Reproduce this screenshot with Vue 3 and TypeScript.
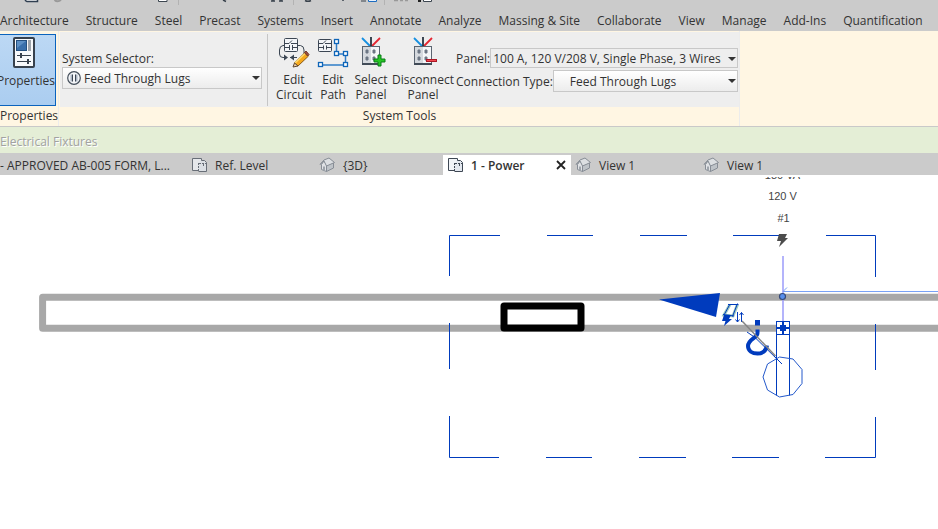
<script setup lang="ts">
import { ref } from 'vue'

interface DocTab {
  title: string
  icon: 'none' | 'plan' | 'house'
}

const menuTabs: string[] = [
  'Architecture', 'Structure', 'Steel', 'Precast', 'Systems', 'Insert', 'Annotate',
  'Analyze', 'Massing & Site', 'Collaborate', 'View', 'Manage', 'Add-Ins', 'Quantification',
]

const docTabs: DocTab[] = [
  { title: '- APPROVED AB-005 FORM, L...', icon: 'none' },
  { title: 'Ref. Level', icon: 'plan' },
  { title: '{3D}', icon: 'house' },
  { title: '1 - Power', icon: 'plan' },
  { title: 'View 1', icon: 'house' },
  { title: 'View 1', icon: 'house' },
]

const activeDoc = ref(3)
const system = ref('Feed Through Lugs')
const panel = ref('100 A, 120 V/208 V, Single Phase, 3 Wires')
const connection = ref('Feed Through Lugs')
</script>

<template>
  <div class="app">
    <header class="titlebar">
      <svg class="quick" viewBox="0 0 440 6" aria-hidden="true">
        <path d="M25.5 0v.5l1.500 1h10.500V0" fill="#fff" stroke="#2f3e50" stroke-width="1.500" />
        <path d="M54.500 0q3 2.500 6.500 0" fill="none" stroke="#999" stroke-width="2" />
        <path d="M158.500 0v1.500h8.500V0" fill="#fff" stroke="#3c4650" />
        <path d="M178.500 0v5M293.500 0v5M384.500 0v5" stroke="#b2b2b2" />
        <path d="M223 0l3 1.500M271 1h4m-2-1v1M279 1h4m-2-1v1M305 .5q3 1.500 6 0M343 0v1" fill="none" stroke="#39424c" stroke-width="1.500" />
        <path d="M361 1h5" stroke="#39424c" />
        <path d="M368.500 0v1.500h8V0" fill="#e9f1fb" stroke="#1c6cc0" />
        <path d="M394 .5h4m2 0h3m2 0h3" stroke="#999" stroke-width="1.500" />
        <path d="M418 1h3" stroke="#222" stroke-width="2" />
        <path d="M423.500 0v1.500h8V0" fill="#fff" stroke="#3c4650" />
      </svg>
      <nav class="menu">
        <a v-for="tab in menuTabs" :key="tab" href="#">{{ tab }}</a>
      </nav>
    </header>

    <section class="ribbon">
      <div class="group props">
        <div class="group-body">
          <button class="properties" type="button">
            <svg width="22" height="31" viewBox="0 0 22 31" aria-hidden="true">
              <rect x="1" y="1" width="20" height="29" rx="1" fill="#f7f9fb" stroke="#37414d" stroke-width="2" />
              <rect x="3.500" y="3.500" width="10" height="10" fill="#3a70ab" stroke="#24507f" />
              <path d="M4 4h9L4 11z" fill="#5c8fc4" />
              <path d="M16.500 3v11" stroke="#9da4ab" stroke-width="3" />
              <path d="M4 18.500h14M4 24.500h14" stroke="#37414d" />
              <path d="M8 16v5M15 22v5" stroke="#37414d" stroke-width="2" />
            </svg>
            <span>Properties</span>
          </button>
        </div>
        <div class="group-title">Properties</div>
      </div>

      <div class="group tools">
        <div class="group-body">
          <div class="selector">
            <label for="system">System Selector:</label>
            <div class="combo tall">
              <svg class="combo-icon" width="14" height="14" viewBox="0 0 14 14" aria-hidden="true">
                <circle cx="7" cy="7" r="6.300" fill="#f4f6f9" stroke="#46505c" stroke-width="1.200" />
                <path d="M4.500 3.500v7M9.500 3.500v7" stroke="#a9b3c2" stroke-width="2" />
                <path d="M5.500 3.500v7M8.500 3.500v7" stroke="#3c4653" />
              </svg>
              <select id="system" v-model="system" class="with-icon"><option>Feed Through Lugs</option></select>
              <svg class="arrow" width="8" height="4" viewBox="0 0 8 4" aria-hidden="true"><path d="M0 0h8L4 4z" fill="#333" /></svg>
            </div>
          </div>

          <div class="buttons">
            <button type="button" class="tool circuit">
              <svg width="32" height="32" viewBox="0 0 32 32" aria-hidden="true">
                <path d="M7 8.500H5Q1.500 9 1.500 13v4q0 3.500 3.500 3.500h2M20 8.500h2.500q3.500.5 3.500 4.500v5M12 20.500h7" fill="none" stroke="#3c4653" />
                <path d="M6 17.500l4 3-4 3zM16 17.500l-4 3 4 3z" fill="#3c4653" />
                <rect x="6.500" y="1.500" width="13" height="13" rx="1" fill="#f3f5f8" stroke="#3c4653" />
                <path d="M7 6.500h4l3-3M13 6.500h6M7 10.500h4M14 10.500h5M11.500 8v5M14.500 8v5" stroke="#3c4653" fill="none" />
                <path d="M27 15.500l3.500 3.500L20 29l-3.500-3z" fill="#f5a81c" stroke="#8a5a17" />
                <path d="M27 16.500L17 26" stroke="#ffdb6d" stroke-width="1.500" />
                <path d="M26.500 15.500l1.500-1.500 3 3.500-1.500 1.500z" fill="#9c4d3e" stroke="#6d382d" />
                <path d="M16.500 26l3.500 3-5 1z" fill="#f3d3a4" stroke="#5c4630" />
              </svg>
              <span>Edit<br>Circuit</span>
            </button>
            <button type="button" class="tool path">
              <svg width="32" height="32" viewBox="0 0 32 32" aria-hidden="true">
                <rect x="1.500" y="2.500" width="13" height="12" rx="1" fill="#f3f5f8" stroke="#3c4653" />
                <path d="M2 6.500h4l3-3M8 6.500h6M2 10.500h4M9 10.500h5M6.500 8.500v4M9.500 8.500v4" stroke="#3c4653" fill="none" />
                <path d="M19.500 5v12h9v11h-25" fill="none" stroke="#2f7dc8" stroke-width="1.500" />
                <g fill="#fff" stroke="#0e65b8" stroke-width="1.300">
                  <rect x="17.500" y="2.500" width="4" height="4" /><rect x="17.500" y="14.500" width="4" height="4" />
                  <rect x="26.500" y="14.500" width="4" height="4" /><rect x="26.500" y="25.500" width="4" height="4" />
                  <rect x="1.500" y="25.500" width="4" height="4" />
                </g>
              </svg>
              <span>Edit<br>Path</span>
            </button>
            <button type="button" class="tool select-panel">
              <svg width="32" height="32" viewBox="-2 0 32 32" aria-hidden="true">
                <path d="M5 1l9 9" stroke="#168fe0" stroke-width="1.800" />
                <path d="M23 1l-9 9" stroke="#e42732" stroke-width="1.800" />
                <path d="M14 0v10" stroke="#293340" stroke-width="1.800" />
                <rect x="5.500" y="9.500" width="17" height="17" fill="#d5d9de" stroke="#5b6571" />
                <path d="M14 10v16h8V10z" fill="#f4f6f8" />
                <path d="M9 13h2v3H9zM16 13h2v3h-2zM9 20h2v3H9zM16 20h2v3h-2z" fill="#6c7784" stroke="#6c7784" />
                <path d="M5 27h18" stroke="#414b57" stroke-width="2" />
                <path d="M21 18h3v4h4v3h-4v4h-3v-4h-4v-3h4z" fill="#27c525" stroke="#087d16" />
              </svg>
              <span>Select<br>Panel</span>
            </button>
            <button type="button" class="tool disconnect">
              <svg width="32" height="32" viewBox="-2 0 32 32" aria-hidden="true">
                <path d="M5 1l9 9" stroke="#168fe0" stroke-width="1.800" />
                <path d="M23 1l-9 9" stroke="#e42732" stroke-width="1.800" />
                <path d="M14 0v10" stroke="#293340" stroke-width="1.800" />
                <rect x="5.500" y="9.500" width="17" height="17" fill="#d5d9de" stroke="#5b6571" />
                <path d="M14 10v16h8V10z" fill="#f4f6f8" />
                <path d="M9 13h2v3H9zM16 13h2v3h-2zM9 20h2v3H9zM16 20h2v3h-2z" fill="#6c7784" stroke="#6c7784" />
                <path d="M5 27h18" stroke="#414b57" stroke-width="2" />
                <rect x="17.500" y="22.500" width="10" height="2" fill="#f34a51" stroke="#ab1624" />
              </svg>
              <span>Disconnect<br>Panel</span>
            </button>
          </div>

          <div class="fields">
            <div class="field">
              <label for="panel">Panel:</label>
              <div class="combo flat">
                <select id="panel" v-model="panel"><option>100 A, 120 V/208 V, Single Phase, 3 Wires</option></select>
                <svg class="arrow" width="8" height="4" viewBox="0 0 8 4" aria-hidden="true"><path d="M0 0h8L4 4z" fill="#333" /></svg>
              </div>
            </div>
            <div class="field">
              <label for="connection">Connection Type:</label>
              <div class="combo tall">
                <select id="connection" v-model="connection" class="indented"><option>Feed Through Lugs</option></select>
                <svg class="arrow" width="8" height="4" viewBox="0 0 8 4" aria-hidden="true"><path d="M0 0h8L4 4z" fill="#333" /></svg>
              </div>
            </div>
          </div>
        </div>
        <div class="group-title centered">System Tools</div>
      </div>
    </section>

    <div class="options">Electrical Fixtures</div>

    <nav class="docs">
      <div v-for="(doc, i) in docTabs" :key="i" class="doc" :class="{ active: i === activeDoc, first: i === 0 }">
        <a href="#" @click.prevent="activeDoc = i">
          <svg v-if="doc.icon === 'plan'" width="18" height="16" viewBox="0 0 18 16" aria-hidden="true">
            <path d="M1.500 1.500h9v12h-9z" fill="#f1f4f8" stroke="#3f4854" />
            <path d="M7.500 14.500v-9h2v-2h4l2 2v9z" fill="#e3e8ef" stroke="none" />
            <path d="M10.500 3.500h3l2 2v9h-8" fill="none" stroke="#3f4854" />
            <path d="M7.500 6v8M8 6.500h8M12.500 7v3" stroke="#3f4854" stroke-dasharray="2 1" />
          </svg>
          <svg v-else-if="doc.icon === 'house'" width="18" height="16" viewBox="0 0 18 16" aria-hidden="true">
            <path d="M2.500 7.500v5l5 2V8L5 4z" fill="#e9edf1" stroke="#6b7480" />
            <path d="M7.500 8.500v6l7-3.500V5.500z" fill="#b9c0c8" stroke="#6b7480" />
            <path d="M1 7.500L5 3l5-2 5.500 4.500-8 3.500L5 4z" fill="#e4e8ec" stroke="#6b7480" />
            <path d="M4 13V9.500h2V14" fill="#8c949e" />
          </svg>
          <span>{{ doc.title }}</span>
        </a>
        <button v-if="i === activeDoc" type="button" aria-label="Close">
          <svg width="10" height="10" viewBox="0 0 10 10" aria-hidden="true"><path d="M1 1l8 8M9 1L1 9" stroke="#222" stroke-width="1.800" /></svg>
        </button>
      </div>
    </nav>

    <main class="canvas">
      <svg viewBox="0 175 938 354" role="img" aria-label="Power plan">
        <g class="label">
          <text x="782.500" y="179">180 VA</text>
          <text x="782.500" y="200">120 V</text>
          <text x="783.500" y="222">#1</text>
        </g>
        <path d="M0 175h938v2H0z" fill="#fff" />
        <path d="M960 297.300H42.600v31H960" fill="none" stroke="#a8a8a8" stroke-width="7" stroke-linejoin="round" />
        <g fill="none" stroke="#003bbd">
          <path d="M449.500 276v-40.500H500M547 235.500h46M640 235.500h47M733 235.500h47M826 235.500h49.500V277M875.500 324v46M875.500 417v40.500H825M779 457.500h-47M686 457.500h-47M592 457.500h-46M499 457.500h-49.500V416M449.500 369v-46" />
        </g>
        <rect x="504" y="306" width="77" height="22" fill="#fff" stroke="#000" stroke-width="7" stroke-linejoin="round" />
        <path d="M659 299.500L720 293l-4 24z" fill="#003bbd" />

        <g fill="none" stroke="#003bbd">
          <path d="M730 304.500l-6 10.500 9 1 4.500-11.500" stroke="#9cc9bd" stroke-width="3" />
          <path d="M728 304.500h10.500M723 314.500l11 1.500M730 304l-6 11M737.500 303.500l-5 13M737.500 312v10m-2-2.500l2 2.500 2-2.500M741.500 322v-9.500m-2 2.500l2-2.500 2 2.500" />
          <path d="M747 332l8 5.500L782 364" />
        </g>
        <path d="M724 315h7l-2 4h3l-8 7 1.500-5H722z" fill="#003bbd" />
        <path d="M755 320h5v5.500h-5z" fill="#003bbd" />
        <path d="M757.500 329.500V333c0 5-9.500 6-9.500 13 0 5 4.500 7.500 9.500 7.500S766 351 767 345.500" fill="none" stroke="#003bbd" stroke-width="4" />
        <path d="M742 321l33.500 35" stroke="#858585" stroke-width="1.500" />

        <path d="M783 256v65" stroke="#9b9bfa" stroke-width="1.500" />
        <path d="M938 291.500H783l4-4" fill="none" stroke="#78a1f5" />
        <circle cx="782.500" cy="296.500" r="3" fill="#5990ed" stroke="#364b7b" stroke-width="1.200" />
        <rect x="776.500" y="321.500" width="13" height="13" fill="#fff" stroke="#003bbd" />
        <path d="M777 335h12v60h-12z" fill="#fff" />
        <g fill="none" stroke="#003bbd">
          <path d="M776.500 334v61.500M789.500 334v61.500" />
          <path d="M777 328h12M783 322v12" stroke-width="2" />
          <path d="M780 328h6" stroke-width="6" />
          <path d="M779.500 357l13.500 2 9 10.500v14l-9 11-13.500 2.500-12-7-4.500-13 4.500-13z" stroke="#2459cb" />
          <path d="M774 356l8 8" />
        </g>
        <path d="M779 234h8l-2 4h3l-9 9 2-6h-4z" fill="#4c4c4c" />
      </svg>
    </main>
  </div>
</template>

<style>
body {
  background: #fff;
}
</style>

<style scoped>
.app {
  font: 12px/15px "Open Sans", "Noto Sans", sans-serif;
  color: #333;
  overflow: hidden;
}
button, select {
  font: inherit;
  color: inherit;
}
a {
  color: inherit;
  text-decoration: none;
}
.app svg {
  display: block;
  flex: none;
}
.titlebar {
  height: 31px;
  background: #cbcbcb;
}
.quick {
  width: 440px;
  height: 6px;
}
.menu {
  display: flex;
  gap: 17px;
  padding-top: 7px;
  white-space: nowrap;
}
.ribbon {
  display: flex;
  height: 95px;
  background: #fff6e3;
  border-bottom: 1px solid #c9c9c9;
}
.group {
  display: flex;
  flex-direction: column;
  padding-top: 1px;
  white-space: nowrap;
}
.group-body {
  display: flex;
  height: 75px;
  background: #eee;
}
.group-title {
  padding-top: 1px;
}
.centered {
  text-align: center;
}
.props {
  width: 58px;
  border-right: 1px solid #ececec;
}
.props .group-body {
  background: none;
}
.properties {
  display: flex;
  flex-direction: column;
  align-items: flex-end;
  width: 56px;
  height: 72px;
  margin-top: 2px;
  padding: 2px 0 0;
  border: 1px solid #0b63bd;
  border-left: 0;
  background: linear-gradient(#bcd8f4, #abcdf0);
}
.properties svg {
  margin-right: 20px;
}
.properties span {
  margin-top: 5px;
}
.tools {
  width: 679px;
  margin-left: 1px;
  border-right: 1px solid #ececec;
}
.selector {
  width: 200px;
  margin: 2px 0 1px;
  padding: 17px 5px 0 2px;
  border-right: 1px solid #c6c6c6;
}
.selector label {
  display: block;
}
.selector .combo {
  margin-top: 1px;
}
.combo {
  position: relative;
  flex: 1;
  height: 20px;
}
.combo.tall {
  height: 22px;
}
.combo select {
  appearance: none;
  display: block;
  width: 100%;
  height: 100%;
  padding: 0 12px 0 2px;
  border: 1px solid #c8c8c8;
  border-radius: 0;
  background: linear-gradient(#fff, #ececec);
}
.combo.flat select {
  background: #eee;
}
.combo select.with-icon {
  padding-left: 21px;
}
.combo select.indented {
  padding-left: 16px;
}
.combo-icon {
  position: absolute;
  left: 5px;
  top: 4px;
}
.arrow {
  position: absolute;
  right: 2px;
  top: 9px;
  pointer-events: none;
}
.buttons {
  display: flex;
  padding: 5px 0 0 5px;
}
.tool {
  display: flex;
  flex-direction: column;
  align-items: center;
  padding: 0;
  border: 0;
  background: none;
}
.tool span {
  margin-top: 3px;
}
.circuit { width: 42px; }
.path { width: 36px; }
.select-panel { width: 40px; }
.disconnect { width: 64px; }
.fields {
  display: flex;
  flex: 1;
  flex-direction: column;
  gap: 2px;
  padding: 16px 1px 0 1px;
}
.field {
  display: flex;
  align-items: center;
}
.options {
  height: 20px;
  padding-top: 6px;
  background: #e4eed6;
  color: #a2a2a2;
  text-shadow: 1px 1px #fff;
  line-height: 17px;
}
.docs {
  display: flex;
  height: 22px;
  background: #cbcbcb;
  white-space: nowrap;
}
.doc {
  display: flex;
  flex: none;
  align-items: center;
  justify-content: space-between;
  width: 128px;
  padding: 2px 5px 0 4px;
  box-sizing: border-box;
}
.doc a {
  display: flex;
  align-items: center;
  gap: 6px;
}
.doc.first {
  width: 187px;
  padding-left: 0;
}
.doc svg {
  opacity: 0.7;
}
.doc.active {
  margin-top: 2px;
  padding-top: 0;
  background: #fff;
  font-weight: 600;
}
.doc.active svg {
  opacity: 1;
}
.doc button {
  padding: 0;
  border: 0;
  background: none;
}
.canvas svg {
  width: 100%;
  height: auto;
}
.label {
  font: 11px "Liberation Sans", Arial, sans-serif;
  fill: #444;
  text-anchor: middle;
}
</style>
